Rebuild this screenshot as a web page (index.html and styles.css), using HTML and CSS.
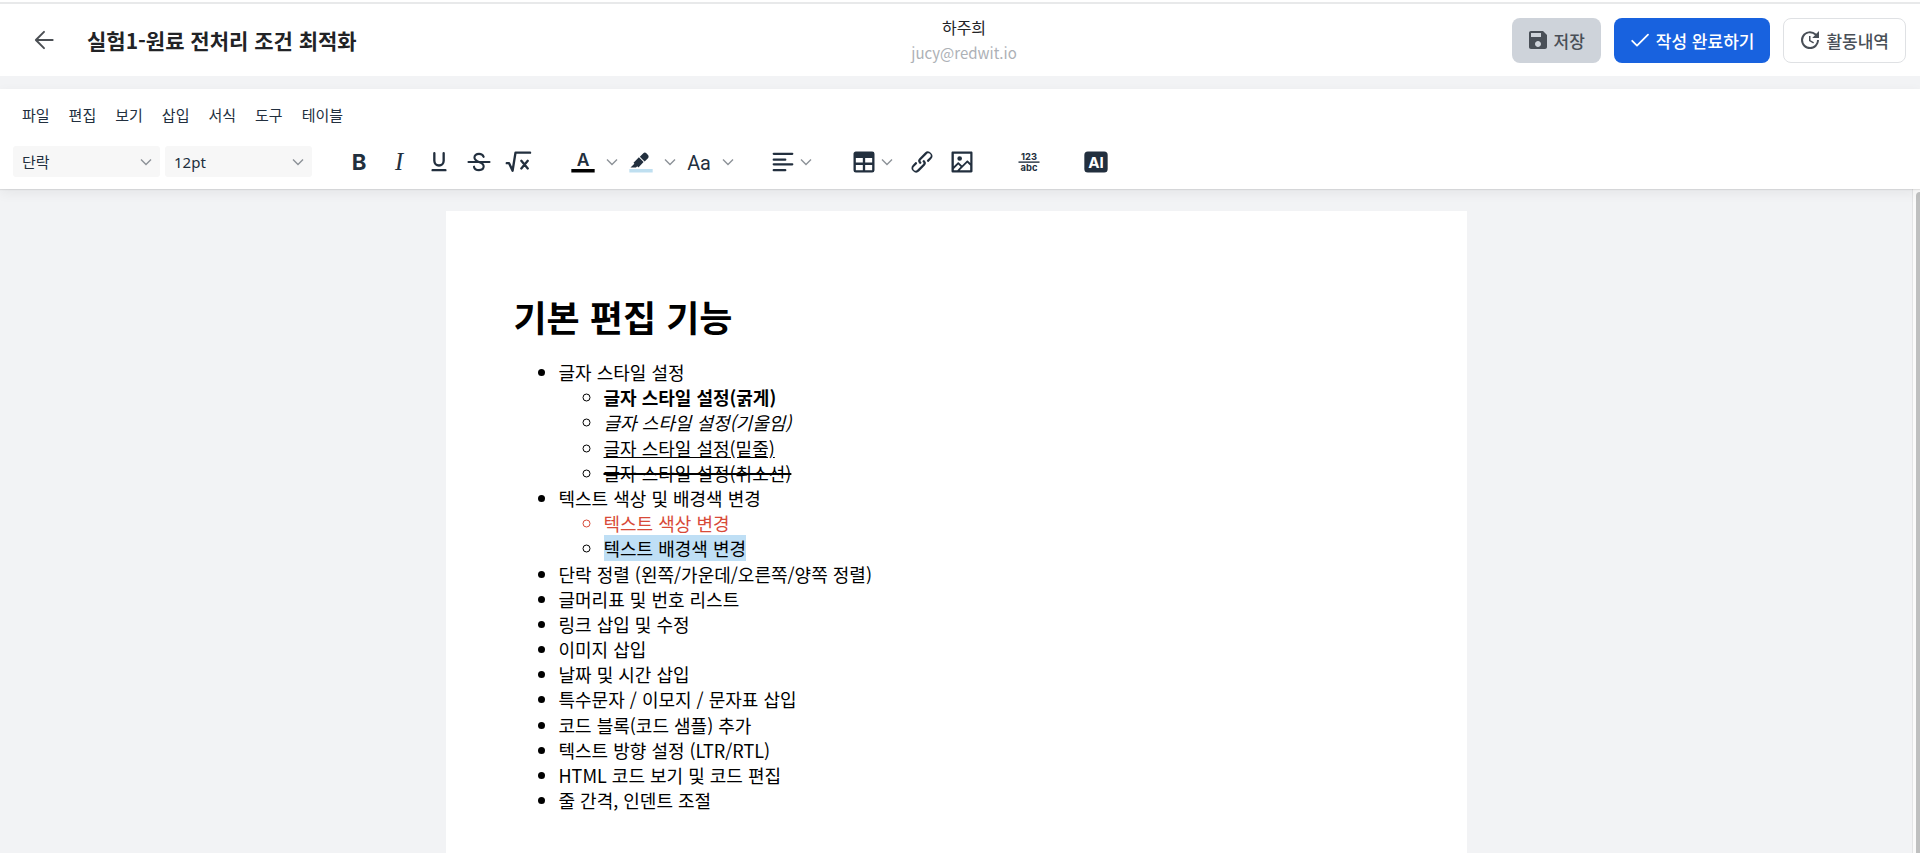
FILE: index.html
```
<!DOCTYPE html>
<html lang="ko">
<head>
    <meta charset="UTF-8">
    <meta name="viewport" content="width=device-width, initial-scale=1.0">
    <title>실험1-원료 전처리 조건 최적화</title>
    <link rel="stylesheet" href="styles.css">
</head>
<body>
    <header class="top-bar">
        <div class="top-left">
            <button type="button" class="back-btn" aria-label="뒤로">
                <svg viewBox="0 0 24 24"><path d="M20 12H5M12 4.5 4.5 12l7.5 7.5" class="line"/></svg>
            </button>
            <h1 class="note-title">실험1-원료 전처리 조건 최적화</h1>
        </div>
        <div class="user">
            <span class="user-name">하주희</span>
            <span class="user-email">jucy@redwit.io</span>
        </div>
        <div class="actions">
            <button type="button" class="btn btn-save">
                <svg viewBox="0 0 24 24"><path d="M17 3H5c-1.11 0-2 .9-2 2v14c0 1.1.89 2 2 2h14c1.1 0 2-.9 2-2V7l-4-4zm-5 16c-1.66 0-3-1.34-3-3s1.34-3 3-3 3 1.34 3 3-1.34 3-3 3zm3-10H5V5h10v4z"/></svg>
                저장
            </button>
            <button type="button" class="btn btn-done">
                <svg viewBox="0 0 24 24"><path d="M4.2 12.8 9 17.6 20 6.6" class="line"/></svg>
                작성 완료하기
            </button>
            <button type="button" class="btn btn-history">
                <svg viewBox="0 0 24 24"><path d="M21 10.12h-6.78l2.74-2.82c-2.73-2.7-7.15-2.8-9.88-.1a6.875 6.875 0 0 0 0 9.79 7.02 7.02 0 0 0 9.88 0C18.32 15.65 19 14.08 19 12.1h2c0 1.98-.88 4.55-2.64 6.29-3.51 3.48-9.21 3.48-12.72 0-3.5-3.47-3.53-9.11-.02-12.58a8.987 8.987 0 0 1 12.65 0L21 3v7.12zM12.5 8v4.25l3.5 2.08-.72 1.21L11 13V8h1.5z"/></svg>
                활동내역
            </button>
        </div>
    </header>

    <div class="editor-header">
        <nav class="menu-bar">
            <button type="button">파일</button>
            <button type="button">편집</button>
            <button type="button">보기</button>
            <button type="button">삽입</button>
            <button type="button">서식</button>
            <button type="button">도구</button>
            <button type="button">테이블</button>
        </nav>

        <div class="toolbar">
            <div class="tool-group select-group">
                <div class="select-box">
                    <select aria-label="블록">
                        <option>단락</option>
                    </select>
                    <svg class="chevron" viewBox="0 0 12 12"><path d="M1 3.5 6 8.5l5-5"/></svg>
                </div>
                <div class="select-box">
                    <select aria-label="글자 크기">
                        <option>12pt</option>
                    </select>
                    <svg class="chevron" viewBox="0 0 12 12"><path d="M1 3.5 6 8.5l5-5"/></svg>
                </div>
            </div>

            <div class="tool-group">
                <button type="button" class="tool" aria-label="굵게">
                    <svg viewBox="0 0 24 24"><text x="12" y="19" class="glyph bold">B</text></svg>
                </button>
                <button type="button" class="tool" aria-label="기울임">
                    <svg viewBox="0 0 24 24"><text x="12" y="19" class="glyph italic">I</text></svg>
                </button>
                <button type="button" class="tool" aria-label="밑줄">
                    <svg viewBox="0 0 24 24"><path d="M8 4.5V11a4 4 0 0 0 8 0V4.5M6.500 19h11" class="line thick"/></svg>
                </button>
                <button type="button" class="tool" aria-label="취소선">
                    <svg viewBox="0 0 24 24"><path d="M16 7.6C15.4 6 13.9 5 12 5 9.7 5 8.1 6.3 8.1 8.2c0 2 1.6 2.9 3.9 3.8 2.5.9 4 1.8 4 3.7 0 2-1.7 3.3-4 3.3-2.2 0-3.9-1.1-4.3-3M3 12h18" class="line"/></svg>
                </button>
                <button type="button" class="tool" aria-label="수식">
                    <svg viewBox="0 0 24 24"><path d="M1.5 13h2l3 6.500L9 4h12.500M14 11l5.500 6.500M19.500 11 14 17.500" class="line thick"/></svg>
                </button>
            </div>

            <div class="tool-group">
                <button type="button" class="tool split" aria-label="글자색">
                    <svg viewBox="0 0 24 24"><text x="12" y="15" class="glyph color">A</text><path d="M2 18h20v3H2z" class="bar-text"/></svg>
                </button>
                <button type="button" class="tool arrow" aria-label="글자색 목록">
                    <svg class="chevron" viewBox="0 0 12 12"><path d="M1 3.5 6 8.5l5-5"/></svg>
                </button>
                <button type="button" class="tool split" aria-label="배경색">
                    <svg viewBox="0 0 24 24"><path d="M2 18h20v3H2z" class="bar-back"/><path d="M7.7 16.7H3l3.3-3.3-.7-.8L10.2 8l4 4.1-4 4.2c-.2.2-.6.2-.8 0l-.6-.7-1.1 1.1zm5-7.5L11 7.4l3-2.9a2 2 0 0 1 2.6 0L18 6c.7.7.7 2 0 2.7l-2.9 2.9-1.8-1.8-.5-.6"/></svg>
                </button>
                <button type="button" class="tool arrow" aria-label="배경색 목록">
                    <svg class="chevron" viewBox="0 0 12 12"><path d="M1 3.5 6 8.5l5-5"/></svg>
                </button>
                <button type="button" class="tool split" aria-label="대소문자">
                    <svg viewBox="0 0 24 24"><text x="12" y="19" class="glyph case">Aa</text></svg>
                </button>
                <button type="button" class="tool arrow" aria-label="대소문자 목록">
                    <svg class="chevron" viewBox="0 0 12 12"><path d="M1 3.5 6 8.5l5-5"/></svg>
                </button>
            </div>

            <div class="tool-group">
                <button type="button" class="tool menu" aria-label="정렬">
                    <svg viewBox="0 0 24 24"><path d="M4 5h16M4 10h10M4 14h16M4 19h10" class="line"/></svg>
                    <svg class="chevron" viewBox="0 0 12 12"><path d="M1 3.5 6 8.5l5-5"/></svg>
                </button>
            </div>

            <div class="tool-group">
                <button type="button" class="tool menu" aria-label="테이블">
                    <svg viewBox="0 0 24 24"><path d="M19 3a2 2 0 0 1 2 2v14a2 2 0 0 1-2 2H5a2 2 0 0 1-2-2V5c0-1.1.9-2 2-2h14ZM5 14.500V19h6v-4.500H5Zm14 0h-6V19h6v-4.500Zm0-6h-6v4h6v-4ZM5 12.500h6v-4H5v4Z"/></svg>
                    <svg class="chevron" viewBox="0 0 12 12"><path d="M1 3.5 6 8.5l5-5"/></svg>
                </button>
                <button type="button" class="tool" aria-label="링크">
                    <svg viewBox="0 0 24 24"><path d="M6.2 12.3a1 1 0 0 1 1.4 1.4l-2 2a2 2 0 1 0 2.6 2.8l4.8-4.8a1 1 0 0 0 0-1.4 1 1 0 1 1 1.4-1.3 2.9 2.9 0 0 1 0 4L9.6 20a3.9 3.9 0 0 1-5.5-5.5l2-2Zm11.6-.6a1 1 0 0 1-1.4-1.4l2-2a2 2 0 1 0-2.6-2.8L11 10.3a1 1 0 0 0 0 1.4A1 1 0 1 1 9.6 13a2.9 2.9 0 0 1 0-4L14.4 4a3.9 3.9 0 0 1 5.5 5.5l-2 2Z"/></svg>
                </button>
                <button type="button" class="tool" aria-label="이미지">
                    <svg viewBox="0 0 24 24"><path d="m5 15.7 3.3-3.2c.3-.3.7-.3 1 0L12 15l4.1-4c.3-.4.8-.4 1 0l2 1.9V5H5v10.7ZM5 18V19h3l2.8-2.9-2-2L5 17.9Zm14-3-2.5-2.4-6.4 6.5H19v-4ZM4 3h16c.6 0 1 .4 1 1v16c0 .6-.4 1-1 1H4a1 1 0 0 1-1-1V4c0-.6.4-1 1-1Zm6 8a2 2 0 1 0 0-4 2 2 0 0 0 0 4Z"/></svg>
                </button>
            </div>

            <div class="tool-group">
                <button type="button" class="tool" aria-label="글자 수">
                    <svg viewBox="0 0 24 24"><text x="12" y="10" class="glyph tiny">123</text><path d="M3 11.5h18v1.200H3z"/><text x="12" y="20" class="glyph tiny">abc</text></svg>
                </button>
            </div>

            <div class="tool-group">
                <button type="button" class="tool" aria-label="AI">
                    <svg viewBox="0 0 24 24"><rect x="2" y="3" width="20" height="18" rx="3"/><text x="12" y="17" class="glyph ai">AI</text></svg>
                </button>
            </div>
        </div>
    </div>

    <main class="workspace">
        <article class="page">
            <h2>기본 편집 기능</h2>
            <ul>
                <li>글자 스타일 설정
                    <ul>
                        <li><strong>글자 스타일 설정(굵게)</strong></li>
                        <li><em>글자 스타일 설정(기울임)</em></li>
                        <li><u>글자 스타일 설정(밑줄)</u></li>
                        <li><s>글자 스타일 설정(취소선)</s></li>
                    </ul>
                </li>
                <li>텍스트 색상 및 배경색 변경
                    <ul>
                        <li class="red">텍스트 색상 변경</li>
                        <li><span class="highlight">텍스트 배경색 변경</span></li>
                    </ul>
                </li>
                <li>단락 정렬 (왼쪽/가운데/오른쪽/양쪽 정렬)</li>
                <li>글머리표 및 번호 리스트</li>
                <li>링크 삽입 및 수정</li>
                <li>이미지 삽입</li>
                <li>날짜 및 시간 삽입</li>
                <li>특수문자 / 이모지 / 문자표 삽입</li>
                <li>코드 블록(코드 샘플) 추가</li>
                <li>텍스트 방향 설정 (LTR/RTL)</li>
                <li>HTML 코드 보기 및 코드 편집</li>
                <li>줄 간격, 인덴트 조절</li>
            </ul>
        </article>
        <div class="scroll-track"><div class="scroll-thumb"></div></div>
    </main>
</body>
</html>
```
FILE: styles.css
```
* {
    box-sizing: border-box;
}

body {
    display: flex;
    flex-direction: column;
    height: 100vh;
    margin: 0;
    overflow: hidden;
    background-color: #f2f3f5;
    font-family: "Noto Sans CJK KR", sans-serif;
}

button {
    padding: 0;
    border: none;
    background: none;
    font-family: inherit;
    cursor: pointer;
}

svg {
    display: block;
    flex: none;
    fill: currentColor;
}

.line {
    fill: none;
    stroke: currentColor;
    stroke-width: 1.8;
    stroke-linecap: round;
    stroke-linejoin: round;
}

.line.thick {
    stroke-width: 2;
}

/* 상단 바 */
.top-bar {
    display: grid;
    grid-template-columns: 1fr auto 1fr;
    align-items: center;
    flex: none;
    margin-top: 2px;
    padding: 10px 14px 10px 22px;
    border-top: 2px solid #e8e9ea;
    background-color: #ffffff;
    box-shadow: 0 -2px 0 #ffffff;
}

.top-left {
    display: flex;
    align-items: center;
    gap: 21px;
}

.back-btn {
    padding: 9px;
    color: #4b4f54;
}

.back-btn svg {
    width: 26px;
    height: 26px;
}

.note-title {
    margin: 0;
    font-size: 21px;
    line-height: 30px;
    font-weight: bold;
    color: #222326;
}

.user {
    display: flex;
    flex-direction: column;
    align-items: center;
    line-height: 26px;
}

.user-name {
    font-size: 16px;
    color: #222326;
}

.user-email {
    font-size: 15px;
    color: #adb1b6;
}

.actions {
    display: flex;
    justify-content: flex-end;
    gap: 13px;
}

.btn {
    display: flex;
    align-items: center;
    gap: 4px;
    height: 45px;
    padding: 0 16px 0 14px;
    border-radius: 8px;
    font-size: 17px;
    font-weight: 500;
    color: #494f57;
}

.btn svg {
    width: 24px;
    height: 24px;
}

.btn-save {
    background-color: #ced3da;
}

.btn-done {
    background-color: #1862df;
    color: #ffffff;
}

.btn-history {
    border: 1px solid #dfe1e4;
    background-color: #ffffff;
}

/* 에디터 메뉴와 툴바 */
.editor-header {
    position: relative;
    flex: none;
    margin-top: 13px;
    padding: 10px 13px;
    background-color: #ffffff;
    box-shadow: 0 1px 1px rgba(0, 0, 0, 0.08), 0 4px 12px rgba(0, 0, 0, 0.06);
    color: #222f3e;
}

.menu-bar {
    display: flex;
    gap: 1px;
    margin-bottom: 13px;
}

.menu-bar button {
    padding: 0 9px;
    font-size: 15px;
    line-height: 32px;
    color: #222f3e;
}

.toolbar {
    display: flex;
    align-items: center;
    gap: 27px;
    height: 35px;
}

.tool-group {
    display: flex;
    align-items: center;
}

.select-group {
    gap: 5px;
}

.select-box {
    position: relative;
}

.select-box select {
    width: 147px;
    height: 31px;
    padding: 0 30px 0 9px;
    border: none;
    border-radius: 3px;
    background-color: #f7f7f7;
    appearance: none;
    font-family: "Noto Sans", "Noto Sans CJK KR", sans-serif;
    font-size: 15px;
    color: #222f3e;
}

.select-box .chevron {
    position: absolute;
    top: 10px;
    right: 8px;
    pointer-events: none;
}

.chevron {
    width: 12px;
    height: 12px;
    fill: none;
    stroke: #8d9298;
    stroke-width: 1.4;
}

.tool {
    display: flex;
    align-items: center;
    justify-content: center;
    width: 40px;
    height: 34px;
    color: #222f3e;
}

.tool svg:not(.chevron) {
    width: 28px;
    height: 28px;
}

.tool.split {
    width: 34px;
}

.tool.arrow {
    width: 24px;
}

.tool.menu {
    justify-content: flex-start;
    gap: 3px;
    width: 54px;
    padding-left: 2px;
}

/* 글자 모양 아이콘 */
.glyph {
    font-family: Inter, sans-serif;
    text-anchor: middle;
}

.bold {
    font-size: 19px;
    font-weight: 700;
}

.italic {
    font-family: "Liberation Serif", serif;
    font-size: 21px;
    font-style: italic;
}

.color {
    font-size: 15px;
    font-weight: 600;
}

.case {
    font-family: Roboto, sans-serif;
    font-size: 17px;
}

.tiny {
    font-size: 8px;
    font-weight: 700;
}

.ai {
    font-size: 13px;
    font-weight: 700;
    fill: #ffffff;
}

.bar-text {
    fill: #000000;
}

.bar-back {
    fill: #bfdff0;
}

/* 문서 영역 */
.workspace {
    display: flex;
    flex: 1;
    min-height: 0;
}

.page {
    width: 100%;
    max-width: 1021px;
    margin: 22px auto 0;
    padding: 80px 68px;
    background-color: #ffffff;
    font-size: 18px;
    line-height: 1.4;
    color: #000000;
}

.page h2 {
    margin: 0 0 19px;
    font-size: 36px;
    line-height: 50px;
}

.page ul {
    margin: 0;
    padding-left: 45px;
}

.page s {
    text-decoration-thickness: 2px;
}

.red {
    color: #d84a38;
}

.highlight {
    background-color: #bfdff5;
}

.scroll-track {
    width: 8px;
    padding: 3px 0 0 3px;
    border-left: 1px solid #e3e4e5;
    background-color: #fafafa;
}

.scroll-thumb {
    height: 100%;
    border-radius: 4px 0 0 0;
    background-color: #bfc0c0;
}
```
